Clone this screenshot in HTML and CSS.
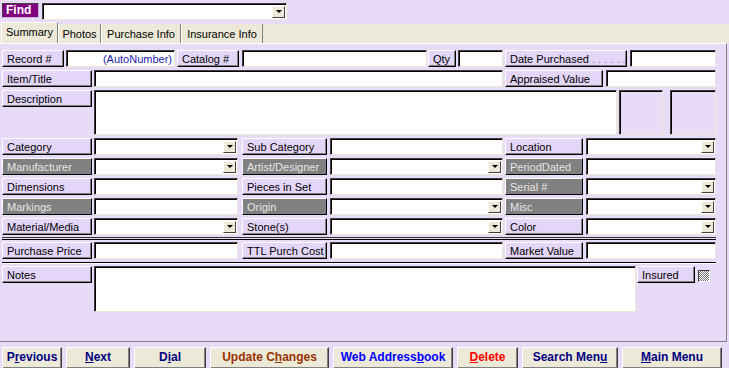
FILE: index.html
```html
<!doctype html>
<html>
<head>
<title>Collection Item</title>
<meta charset="utf-8">
<link rel="stylesheet" href="styles.css">
</head>
<body>

<div class="find-bar">
	<span class="find-label">Find</span>
	<span class="field combo find-combo"><span class="drop"></span></span>
</div>

<div class="tab-strip">
	<span class="tab tab-selected">Summary</span>
	<span class="tab tab-photos">Photos</span>
	<span class="tab tab-purchase">Purchase Info</span>
	<span class="tab tab-insurance">Insurance Info</span>
</div>

<div class="panel">
	<div class="row">
		<span class="lbl record-lbl">Record #</span>
		<span class="field record-no">(AutoNumber)</span>
		<span class="lbl catalog-lbl">Catalog #</span>
		<span class="field catalog-no"></span>
		<span class="lbl qty-lbl">Qty</span>
		<span class="field qty"></span>
		<span class="lbl date-lbl">Date Purchased<span class="dots"> . . . . . .</span></span>
		<span class="field date"></span>
	</div>

	<div class="row">
		<span class="lbl wide-lbl">Item/Title</span>
		<span class="field title"></span>
		<span class="lbl appraised-lbl">Appraised Value</span>
		<span class="field appraised"></span>
	</div>

	<div class="row tall-row">
		<span class="lbl wide-lbl">Description</span>
		<span class="field description"></span>
		<span class="field blank-box box-a"></span>
		<span class="field blank-box box-b"></span>
	</div>

	<div class="grid-row">
		<span class="lbl">Category</span>
		<span class="field combo"><span class="drop"></span></span>
		<span class="lbl">Sub Category</span>
		<span class="field"></span>
		<span class="lbl">Location</span>
		<span class="field combo"><span class="drop"></span></span>
	</div>

	<div class="grid-row">
		<span class="lbl dark">Manufacturer</span>
		<span class="field combo"><span class="drop"></span></span>
		<span class="lbl dark">Artist/Designer</span>
		<span class="field combo"><span class="drop"></span></span>
		<span class="lbl dark">PeriodDated</span>
		<span class="field"></span>
	</div>

	<div class="grid-row">
		<span class="lbl">Dimensions</span>
		<span class="field"></span>
		<span class="lbl">Pieces in Set</span>
		<span class="field"></span>
		<span class="lbl dark">Serial #</span>
		<span class="field combo"><span class="drop"></span></span>
	</div>

	<div class="grid-row">
		<span class="lbl dark">Markings</span>
		<span class="field"></span>
		<span class="lbl dark">Origin</span>
		<span class="field combo"><span class="drop"></span></span>
		<span class="lbl dark">Misc</span>
		<span class="field combo"><span class="drop"></span></span>
	</div>

	<div class="grid-row">
		<span class="lbl">Material/Media</span>
		<span class="field combo"><span class="drop"></span></span>
		<span class="lbl">Stone(s)</span>
		<span class="field combo"><span class="drop"></span></span>
		<span class="lbl">Color</span>
		<span class="field combo"><span class="drop"></span></span>
	</div>

	<div class="rule double-rule"></div>

	<div class="grid-row">
		<span class="lbl">Purchase Price</span>
		<span class="field"></span>
		<span class="lbl">TTL Purch Cost</span>
		<span class="field"></span>
		<span class="lbl">Market Value</span>
		<span class="field"></span>
	</div>

	<div class="rule"></div>

	<div class="row tall-row">
		<span class="lbl wide-lbl">Notes</span>
		<span class="field notes"></span>
		<span class="lbl insured-lbl">Insured</span>
		<span class="checkbox"></span>
	</div>
</div>

<div class="button-bar">
	<span class="btn btn-prev">P<u>r</u>evious</span>
	<span class="btn btn-next"><u>N</u>ext</span>
	<span class="btn btn-dial">D<u>i</u>al</span>
	<span class="btn btn-update">Update C<u>h</u>anges</span>
	<span class="btn btn-web">Web Address<u>b</u>ook</span>
	<span class="btn btn-delete"><u>D</u>elete</span>
	<span class="btn btn-search">Search Men<u>u</u></span>
	<span class="btn btn-main"><u>M</u>ain Menu</span>
</div>

</body>
</html>
```

FILE: styles.css
```css
body {
	margin: 0;
	width: 729px;
	height: 368px;
	overflow: hidden;
	background-color: #E8DBF8;
	font-family: "Liberation Sans", Arial, sans-serif;
	font-size: 11px;
	color: #000;
}

/* Find bar */
.find-bar {
	display: flex;
	height: 22px;
	padding: 3px 0 0 2px;
	box-sizing: border-box;
}

.find-label {
	width: 37px;
	height: 15px;
	box-sizing: border-box;
	padding-left: 3px;
	background-color: #800080;
	color: #fff;
	font-size: 12px;
	font-weight: bold;
	line-height: 13px;
	border: 1px solid;
	border-color: #404040 #C8B8E0 #C8B8E0 #404040;
}

.find-combo {
	width: 245px;
	height: 16px;
	margin-left: 3px;
}

/* Tabs */
.tab-strip {
	display: flex;
	align-items: flex-end;
	height: 21px;
	background: linear-gradient(#E8DBF8 2px, #ECE9D8 2px);
}

.tab {
	height: 19px;
	box-sizing: border-box;
	padding-top: 4px;
	line-height: 13px;
	text-align: center;
	background-color: #ECE9D8;
	border-left: 1px solid #fff;
	border-right: 1px solid #808080;
}

.tab-selected {
	width: 57px;
	height: 21px;
	margin-left: 1px;
	padding-top: 3px;
	border-top: 1px solid #fff;
}

.tab-photos { width: 43px; }
.tab-purchase { width: 80px; }
.tab-insurance { width: 82px; }

/* Panel */
.panel {
	width: 727px;
	height: 299px;
	box-sizing: border-box;
	padding: 6px 0 0 2px;
	border-top: 1px solid #fff;
	border-right: 1px solid #808080;
	border-bottom: 1px solid #808080;
}

.row {
	display: flex;
	align-items: flex-start;
	height: 17px;
	margin-bottom: 3px;
}

.tall-row {
	height: 45px;
}

.grid-row {
	display: grid;
	grid-template-columns: 92px 148px 88px 175px 81px 130px;
	height: 17px;
	margin-bottom: 3px;
}

.grid-row > :nth-child(1) { width: 90px; }
.grid-row > :nth-child(2) { width: 144px; }
.grid-row > :nth-child(3) { width: 85px; }
.grid-row > :nth-child(4) { width: 173px; }
.grid-row > :nth-child(5) { width: 78px; }
.grid-row > :nth-child(6) { width: 130px; }

.lbl {
	height: 17px;
	box-sizing: border-box;
	padding-left: 4px;
	line-height: 17px;
	white-space: nowrap;
	overflow: hidden;
	background-color: #E4D6F8;
	border: 1px solid;
	border-color: #fff #000 #000 #fff;
	box-shadow: inset -1px -1px 0 #808080;
}

.lbl.dark {
	background-color: #808080;
	color: #E6E6E6;
}

.field {
	height: 17px;
	box-sizing: border-box;
	background-color: #fff;
	border: 1px solid;
	border-color: #404040 #ECE9D8 #ECE9D8 #404040;
	box-shadow: inset 1px 1px 0 #000;
}

.combo {
	display: flex;
	justify-content: flex-end;
	align-items: center;
	padding-right: 1px;
}

.drop {
	display: flex;
	justify-content: center;
	align-items: center;
	width: 13px;
	height: 12px;
	box-sizing: border-box;
	background-color: #ECE9D8;
	border: 1px solid;
	border-color: #fff #404040 #404040 #fff;
}

.drop::after {
	content: "";
	width: 0;
	height: 0;
	border-left: 3px solid transparent;
	border-right: 3px solid transparent;
	border-top: 3px solid #000;
}

/* Row 1 */
.record-lbl { width: 62px; }
.record-no {
	width: 109px;
	margin-left: 2px;
	padding-right: 2px;
	line-height: 16px;
	text-align: right;
	color: #1A1AA8;
}
.catalog-lbl { width: 62px; margin-left: 2px; }
.catalog-no { width: 185px; margin-left: 3px; }
.qty-lbl { width: 28px; margin-left: 1px; }
.qty { width: 45px; margin-left: 2px; }
.date-lbl { width: 122px; margin-left: 2px; }
.dots { color: #8A8A8A; }
.date { width: 86px; margin-left: 3px; }

/* Row 2 */
.wide-lbl { width: 90px; }
.title { width: 409px; margin-left: 2px; }
.appraised-lbl { width: 98px; margin-left: 2px; }
.appraised { width: 110px; margin-left: 3px; }

/* Description */
.description { width: 523px; height: 45px; margin-left: 2px; }
.blank-box { height: 45px; background-color: #E8DBF8; }
.box-a { width: 44px; margin-left: 2px; }
.box-b { width: 46px; margin-left: 7px; }

/* Separators */
.rule {
	width: 714px;
	height: 0;
	margin-bottom: 2px;
	border-top: 1px solid #000;
	border-bottom: 1px solid #fff;
}

.double-rule {
	height: 1px;
	margin-top: -1px;
	border-top: 1px solid #303030;
	border-bottom: 1px solid #000;
}

/* Notes */
.notes { width: 542px; height: 46px; margin-left: 2px; }
.insured-lbl { width: 58px; margin-left: 1px; }

.checkbox {
	width: 12px;
	height: 12px;
	box-sizing: border-box;
	margin: 4px 0 0 3px;
	border: 1px solid;
	border-color: #404040 #fff #fff #404040;
	background: repeating-conic-gradient(#707070 0 25%, #fff 0 50%) 0 0 / 2px 2px;
}

/* Command buttons */
.button-bar {
	display: flex;
	gap: 4px;
	margin-top: 5px;
	padding-left: 2px;
}

.btn {
	height: 22px;
	box-sizing: border-box;
	line-height: 19px;
	text-align: center;
	font-size: 12px;
	font-weight: bold;
	color: #000080;
	background-color: #ECE9D8;
	border: 1px solid;
	border-color: #fff #404040 #404040 #fff;
	box-shadow: inset -1px -1px 0 #808080;
}

.btn-prev { width: 60px; }
.btn-next { width: 64px; }
.btn-dial { width: 72px; }
.btn-update { width: 119px; color: #993300; }
.btn-web { width: 120px; color: #0000FF; }
.btn-delete { width: 61px; color: #FF0000; }
.btn-search { width: 96px; }
.btn-main { width: 100px; }
```
